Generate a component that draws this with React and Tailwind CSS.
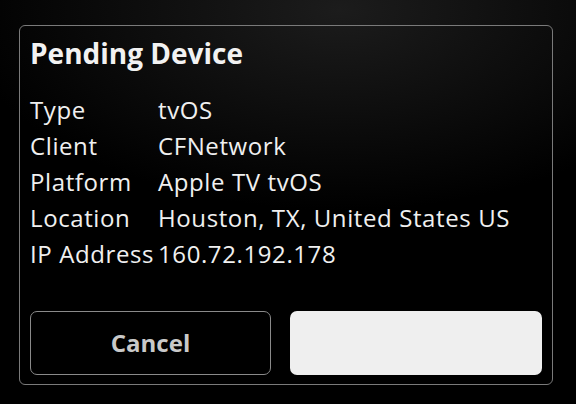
import React from "react";

const rows = [
  ["Type", "tvOS"],
  ["Client", "CFNetwork"],
  ["Platform", "Apple TV tvOS"],
  ["Location", "Houston, TX, United States US"],
  ["IP Address", "160.72.192.178"],
];

export default function App() {
  return (
    <div
      className="w-[576px] h-[404px] bg-black bg-[radial-gradient(ellipse_380px_200px_at_340px_10px,#1c1c1c,#000000)] pt-[25px] pl-[19px]"
      style={{ fontFamily: "'Open Sans', Lato, sans-serif" }}
    >
      <div className="w-[534px] h-[360px] border border-[#7a7a7a] rounded-[6px] px-[10px] pt-[8px] flex flex-col">
        {/* Title */}
        <h1 className="text-[28px] leading-[38px] font-bold text-[#f2f2f2]">Pending Device</h1>

        {/* Details */}
        <div className="mt-[20px] flex flex-col">
          {rows.map(([label, value]) => (
            <div key={label} className="flex h-[36px] items-center text-[24px] tracking-[0.6px] font-medium text-[#f0f0f0]">
              <span className="w-[128px] shrink-0 whitespace-nowrap">{label}</span>
              <span className="whitespace-nowrap">{value}</span>
            </div>
          ))}
        </div>

        {/* Actions */}
        <div className="mt-auto mb-[9px] flex gap-[19px]">
          <button className="w-[241px] h-[64px] border border-[#8a8a8a] rounded-[7px] text-[24px] font-bold text-[#c9c9c9]">
            Cancel
          </button>
          <button className="flex-1 h-[64px] bg-[#efefef] rounded-[7px]"></button>
        </div>
      </div>
    </div>
  );
}
